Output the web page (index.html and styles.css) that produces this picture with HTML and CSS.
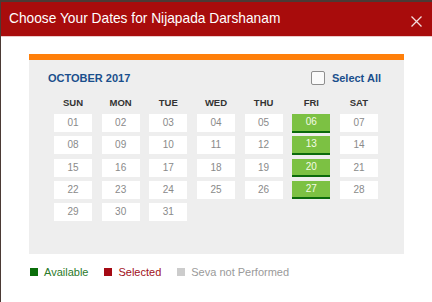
FILE: index.html
```html
<!DOCTYPE html>
<html>
<head>
<meta charset="utf-8">
<link rel="stylesheet" href="styles.css">
</head>
<body>
<div class="modal">
  <div class="modal-header">
    <span class="title">Choose Your Dates for Nijapada Darshanam</span>
    <span class="close">
      <svg width="11" height="11" viewBox="0 0 11 11"><path d="M0.5 0.5L10.5 10.5M10.5 0.5L0.5 10.5" stroke="#f3dede" stroke-width="1.3" fill="none"/></svg>
    </span>
  </div>
  <div class="modal-body">
    <div class="panel">
      <div class="panel-head">
        <span class="month">OCTOBER 2017</span>
        <label class="select-all"><span class="box"></span><span>Select All</span></label>
      </div>
      <div class="grid days">
        <div>SUN</div><div>MON</div><div>TUE</div><div>WED</div><div>THU</div><div>FRI</div><div>SAT</div>
      </div>
      <div class="grid dates">
        <div class="d">01</div><div class="d">02</div><div class="d">03</div><div class="d">04</div><div class="d">05</div><div class="d on">06</div><div class="d">07</div>
        <div class="d">08</div><div class="d">09</div><div class="d">10</div><div class="d">11</div><div class="d">12</div><div class="d on">13</div><div class="d">14</div>
        <div class="d">15</div><div class="d">16</div><div class="d">17</div><div class="d">18</div><div class="d">19</div><div class="d on">20</div><div class="d">21</div>
        <div class="d">22</div><div class="d">23</div><div class="d">24</div><div class="d">25</div><div class="d">26</div><div class="d on">27</div><div class="d">28</div>
        <div class="d">29</div><div class="d">30</div><div class="d">31</div>
      </div>
    </div>
    <div class="legend">
      <span class="item avail"><i></i>Available</span>
      <span class="item sel"><i></i>Selected</span>
      <span class="item none"><i></i>Seva not Performed</span>
    </div>
  </div>
</div>
</body>
</html>
```
FILE: styles.css
```css
html, body {
  margin: 0;
  padding: 0;
}
body {
  background: #4b3a35;
  width: 432px;
  height: 302px;
  overflow: hidden;
  font-family: "Liberation Sans", Arial, sans-serif;
  padding: 2px 0 0 1px;
  box-sizing: border-box;
}
.modal {
  background: #fff;
  height: 300px;
}
.modal-header {
  background: #a80c0c;
  height: 34px;
  border-bottom: 1px solid #ecc9c9;
  display: flex;
  align-items: center;
  justify-content: space-between;
  padding: 0 10px 0 8px;
}
.title {
  color: #fff;
  font-size: 13.75px;
  line-height: 16px;
}
.close {
  display: flex;
  margin-top: 5px;
}
.modal-body {
  padding: 17px 28px 0 28px;
}
.panel {
  background: #eeeeee;
  border-top: 6px solid #ff7f0a;
  padding: 11px 23px 33px 19px;
}
.panel-head {
  display: flex;
  justify-content: space-between;
  align-items: center;
  height: 14px;
}
.month {
  color: #1a4f8c;
  font-weight: bold;
  font-size: 11px;
}
.select-all {
  display: flex;
  align-items: center;
  gap: 7px;
  color: #1a4f8c;
  font-weight: bold;
  font-size: 11px;
}
.box {
  width: 12px;
  height: 12px;
  border: 1.5px solid #8e8e8e;
  border-radius: 2px;
  background: #fafafa;
}
.grid {
  display: grid;
  grid-template-columns: repeat(7, 38px);
  column-gap: 9.67px;
  margin: 0 3px 0 6px;
}
.days {
  margin-top: 12px;
  font-size: 9.5px;
  font-weight: bold;
  color: #333;
  line-height: 12px;
  text-align: center;
}
.dates {
  margin-top: 5px;
  row-gap: 3.75px;
}
.d {
  background: #fff;
  height: 18px;
  line-height: 18px;
  text-align: center;
  font-size: 10px;
  color: #8a8a8a;
}
.d.on {
  background: #7cc143;
  border-bottom: 2px solid #0b6a0b;
  box-sizing: border-box;
  height: 18.5px;
  line-height: 16.5px;
  color: #f4fbe6;
}
.legend {
  margin-top: 12px;
  margin-left: 1px;
  display: flex;
  gap: 16px;
  font-size: 11px;
  line-height: 12px;
}
.item {
  display: flex;
  align-items: center;
  gap: 6px;
}
.item i {
  width: 8px;
  height: 8px;
  display: block;
}
.avail { color: #2b7a2b; }
.avail i { background: #0a6e0a; }
.sel { color: #a1101a; }
.sel i { background: #a50a14; }
.none { color: #9a9a9a; }
.none i { background: #cccccc; }
```
